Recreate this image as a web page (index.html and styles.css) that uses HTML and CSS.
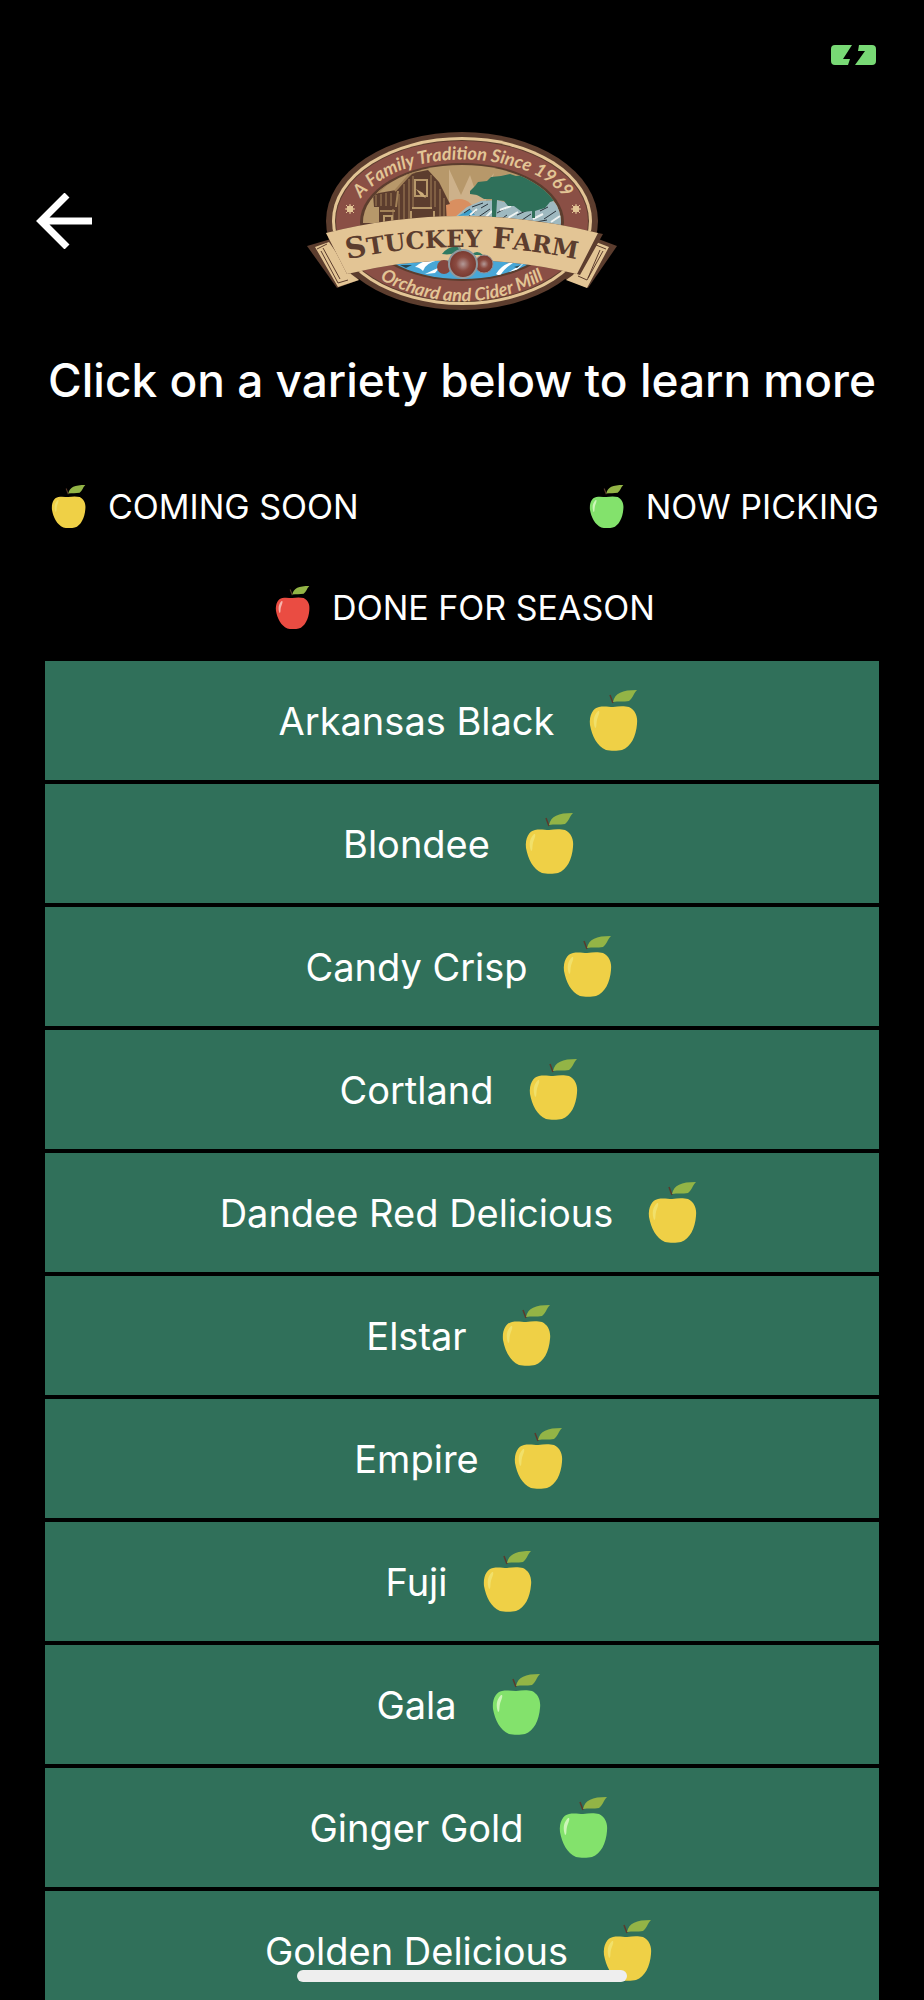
FILE: index.html
```html
<!DOCTYPE html>
<html lang="en">
<head>
    <meta charset="UTF-8">
    <meta name="viewport" content="width=device-width, initial-scale=1.0">
    <title>Stuckey Farm - Apple Varieties</title>
    <link rel="stylesheet" href="styles.css">
</head>
<body>
    <!-- shared apple icon, body colour comes from currentColor -->
    <svg class="sprite" aria-hidden="true">
        <symbol id="apple" viewBox="0 0 62 62">
            <path d="M27 5 L30 13" stroke="#5b3a2c" stroke-width="1.5" fill="none"/>
            <path d="M30 12 C32 3 39 0 54 0 C50 4 50 8 46 11 C41 12 35 11 30 12 Z" fill="#93b446"/>
            <path d="M30 17 C36 16 42 16 46 17 C52 20 55 26 54 34 C53 46 48 57 39 60 C35 61 27 61 23 60 C14 56 9 46 7 35 C6 25 10 18 16 17 C21 16 26 17 30 17 Z" fill="currentColor"/>
            <path class="shine" d="M15 21 C10 26 10 32 12 38 C14 38 13 34 14 30 C15 26 17 23 16 21 Z"/>
        </symbol>
    </svg>

    <div class="screen">
        <div class="status-bar">
            <svg class="battery" viewBox="0 0 46 20" role="img" aria-label="Battery charging">
                <path d="M4 0 H21 L12 14 H19 L17 20 H4 Q0 20 0 16 V4 Q0 0 4 0 Z" fill="#78d975"/>
                <path d="M28 0 H41 Q45 0 45 4 V16 Q45 20 41 20 H24 L34 6 H27 Z" fill="#78d975"/>
            </svg>
        </div>

        <header class="header">
            <a class="back" href="#" aria-label="Back">
                <svg viewBox="0 0 58 56" aria-hidden="true">
                    <path d="M31 2 L5 28 L31 54 M5 28 H56" fill="none" stroke="#fff" stroke-width="7"/>
                </svg>
            </a>

            <svg class="logo" viewBox="0 0 310 180" role="img" aria-label="Stuckey Farm">
                <defs>
                    <path id="arc-top" d="M50 74 A110 62 0 0 1 262 74"/>
                    <path id="arc-banner" d="M24 132 Q155 100 286 132"/>
                    <path id="arc-bottom" d="M62 142 Q155 199 248 142"/>
                    <clipPath id="scene"><ellipse cx="155" cy="91" rx="99" ry="57"/></clipPath>
                    <radialGradient id="fruit">
                        <stop offset="0" stop-color="#b39a98"/>
                        <stop offset="0.5" stop-color="#8a4a40"/>
                        <stop offset="1" stop-color="#77382e"/>
                    </radialGradient>
                </defs>

                <!-- oval frame -->
                <ellipse cx="155" cy="90" rx="136" ry="89" fill="#5c3d2e"/>
                <ellipse cx="155" cy="90" rx="130" ry="84" fill="#e3c595"/>
                <ellipse cx="155" cy="90" rx="127" ry="81" fill="#5c3d2e"/>
                <ellipse cx="155" cy="90" rx="126" ry="80" fill="#8a4f45"/>
                <ellipse cx="155" cy="91" rx="102" ry="59" fill="#5c3d2e"/>

                <g clip-path="url(#scene)">
                    <rect x="50" y="30" width="210" height="62" fill="#b7986a"/>
                    <path d="M142 75 L142 38 L154 64 L163 44 L170 65 L187 42 L176 80 Z" fill="#cdb18a"/>
                    <circle cx="152" cy="85" r="17" fill="#d98f60"/>

                    <!-- barn -->
                    <path d="M66 63 L89 59 L96 51 L106 42 L121 39 L132 51 L143 73 L139 74 L140 94 L72 98 L72 76 L67 76 Z" fill="#5c3d2e"/>
                    <path d="M88 60 L104 42 M70 62 L88 46 L108 41 M91 60 L89 76 M73 80 H88" stroke="#a38258" stroke-width="2" fill="none"/>
                    <path d="M69 64 V75 M74 63 V75 M79 62 V75 M84 62 V75 M92 63 V92 M97 53 V90 M102 48 V88 M106 45 V76 M124 44 V76 M128 50 V76 M133 58 V88 M137 67 V88 M86 78 V94" stroke="#a38258" stroke-width="1"/>
                    <path d="M108 49 H120 V65 H108 Z M105 77 H125 M104 80 V88 M127 80 V88 M77 85 H85 V93 H77 Z" stroke="#b7986a" stroke-width="2" fill="none"/>
                    <path d="M109 58 L116 62 L119 67 L114 65 Z" fill="#cdae7b"/>

                    <!-- rocky shore -->
                    <path d="M148 86 L160 76 L174 70 L190 69 L205 73 L225 74 L246 70 L258 80 L258 98 L148 94 Z" fill="#9fb9c0"/>
                    <path d="M151 85 L163 78 L168 84 Z" fill="#3e9fc9"/>
                    <path d="M157 82 L163 78 M161 86 L169 80 M165 76 L176 72 M170 87 L183 78 M174 77 L181 73 M190 82 L201 76 M193 89 L200 84 M210 84 L221 79 M215 89 L224 83 M233 80 L241 76 M237 88 L249 80 M229 91 L240 89" stroke="#29333b" stroke-width="1"/>
                    <path d="M163 84 L170 78 M178 87 L185 80 M193 79 L204 75 M201 87 L211 81 M226 88 L236 83 M244 91 L253 85" stroke="#eef3f2" stroke-width="2"/>

                    <!-- trees -->
                    <path d="M163 60 L168 55 L171 51 L180 50 L184 46 L194 45 L203 43 L209 45 L217 44 L225 47 L232 50 L241 55 L249 69 L243 71 L238 77 L231 79 L228 80 V87 L225 87 V80 L215 81 L207 75 L201 75 L197 70 L190 69 L189 87 L185 87 V68 L177 68 L170 64 L163 63 Z" fill="#2f705a"/>

                    <!-- river -->
                    <rect x="50" y="118" width="210" height="34" fill="#48a7d7"/>
                    <path d="M108 136 Q118 127 132 129 Q118 132 116 140 Q112 136 108 136 Z M118 143 L133 136 L128 142 Z M189 143 Q195 132 212 129 Q198 135 193 145 Z M202 141 L217 132 L209 140 Z" fill="#fff"/>
                    <path d="M93 134 L105 134 L99 137 Z M207 136 L214 134 L210 137 Z" fill="#294852"/>
                </g>

                <!-- banner tails -->
                <path d="M0 115 L24 108 L52 149 L30 157 Z" fill="#5c3d2e"/>
                <path d="M8 116 L22 111 L44 143 L52 149 L31 156 Z" fill="#e3c595"/>
                <path d="M10 118 L20 113 M14 120 L31 152 L41 149 M16 117 L33 148" stroke="#5c3d2e" stroke-width="1" fill="none"/>
                <path d="M310 115 L286 106 L258 148 L281 157 Z" fill="#5c3d2e"/>
                <path d="M302 116 L289 111 L266 144 L259 149 L280 157 Z" fill="#e3c595"/>
                <path d="M299 118 L289 114 M296 120 L280 149 L271 145 M293 119 L281 147" stroke="#5c3d2e" stroke-width="1" fill="none"/>

                <!-- banner -->
                <path d="M19 102 Q155 68 291 102 L296 103 L273 144 L270 143 Q155 115 40 143 Z" fill="#5c3d2e"/>
                <path d="M19 102 Q155 68 291 102 L270 143 Q155 115 40 143 Z" fill="#e3c595"/>

                <!-- fruit -->
                <path d="M135 123 Q143 113 154 117 Q148 125 135 123 Z M164 124 Q170 118 176 124 Z" fill="#2f7a62"/>
                <circle cx="137" cy="136" r="7" fill="#85463d"/>
                <circle cx="177" cy="133" r="9" fill="url(#fruit)" stroke="#8e8b90"/>
                <circle cx="156" cy="133" r="14" fill="url(#fruit)" stroke="#8e9aa0" stroke-width="2"/>
                <path d="M154 120 L151 115" stroke="#7f9a93" stroke-width="2"/>

                <!-- side stars -->
                <g fill="#e3c595" stroke="#e3c595">
                    <circle cx="43" cy="78" r="3"/>
                    <path d="M43 73 V83 M38 78 H48 M39 74 L47 82 M47 74 L39 82"/>
                    <circle cx="269" cy="78" r="3"/>
                    <path d="M269 73 V83 M264 78 H274 M265 74 L273 82 M273 74 L265 82"/>
                </g>

                <text class="logo-script"><textPath href="#arc-top" startOffset="50%">A Family Tradition Since 1969</textPath></text>
                <text class="logo-name"><textPath href="#arc-banner" startOffset="50%">S<tspan class="small">TUCKEY</tspan> F<tspan class="small">ARM</tspan></textPath></text>
                <text class="logo-script"><textPath href="#arc-bottom" startOffset="50%">Orchard and Cider Mill</textPath></text>
            </svg>
        </header>

        <h1 class="title">Click on a variety below to learn more</h1>

        <div class="legend">
            <div class="legend-item"><svg class="apple soon"><use href="#apple"/></svg>COMING SOON</div>
            <div class="legend-item"><svg class="apple picking"><use href="#apple"/></svg>NOW PICKING</div>
            <div class="legend-item done-item"><svg class="apple done"><use href="#apple"/></svg>DONE FOR SEASON</div>
        </div>

        <ul class="varieties">
            <li><button type="button">Arkansas Black<svg class="apple soon"><use href="#apple"/></svg></button></li>
            <li><button type="button">Blondee<svg class="apple soon"><use href="#apple"/></svg></button></li>
            <li><button type="button">Candy Crisp<svg class="apple soon"><use href="#apple"/></svg></button></li>
            <li><button type="button">Cortland<svg class="apple soon"><use href="#apple"/></svg></button></li>
            <li><button type="button">Dandee Red Delicious<svg class="apple soon"><use href="#apple"/></svg></button></li>
            <li><button type="button">Elstar<svg class="apple soon"><use href="#apple"/></svg></button></li>
            <li><button type="button">Empire<svg class="apple soon"><use href="#apple"/></svg></button></li>
            <li><button type="button">Fuji<svg class="apple soon"><use href="#apple"/></svg></button></li>
            <li><button type="button">Gala<svg class="apple picking"><use href="#apple"/></svg></button></li>
            <li><button type="button">Ginger Gold<svg class="apple picking"><use href="#apple"/></svg></button></li>
            <li><button type="button">Golden Delicious<svg class="apple soon"><use href="#apple"/></svg></button></li>
        </ul>
    </div>

    <div class="home-indicator"></div>
</body>
</html>
```
FILE: styles.css
```css
* {
    box-sizing: border-box;
}
body {
    margin: 0;
    background-color: #000;
    color: #fff;
    font-family: Inter, "Liberation Sans", sans-serif;
}
.sprite {
    display: none;
}
.screen {
    display: flex;
    flex-direction: column;
    height: 100vh;
    overflow: hidden;
}
.status-bar {
    display: flex;
    justify-content: flex-end;
    padding: 45px 47px 66px;
}
.battery {
    width: 46px;
    height: 20px;
}
.header {
    display: grid;
    grid-template-columns: 1fr auto 1fr;
    align-items: center;
    padding: 0 36px;
}
.back {
    justify-self: start;
}
.back svg {
    display: block;
    width: 58px;
    height: 56px;
}
.logo {
    display: block;
    width: 310px;
    height: 180px;
}
.logo-script {
    font-family: "Liberation Sans Narrow", Lato, sans-serif;
    font-size: 18px;
    font-style: italic;
    font-weight: bold;
    fill: #e3c595;
    text-anchor: middle;
}
.logo-name {
    font-family: "DejaVu Serif", serif;
    font-size: 29px;
    font-weight: bold;
    fill: #5c3d2e;
    text-anchor: middle;
}
.logo-name .small {
    font-size: 24px;
}
.title {
    margin: 39px 0 75px;
    font-size: 46px;
    font-weight: 500;
    line-height: 60px;
    text-align: center;
}
.legend {
    display: flex;
    flex-wrap: wrap;
    justify-content: space-between;
    row-gap: 57px;
    padding: 0 45px 31px 47px;
}
.legend-item {
    display: flex;
    align-items: center;
    gap: 17px;
    font-size: 34px;
    line-height: 44px;
}
.done-item {
    flex-basis: 100%;
    justify-content: center;
}
.apple {
    flex: none;
    width: 44px;
    height: 44px;
}
.soon {
    color: #efd046;
    fill: #f1e06a;
}
.picking {
    color: #83e26c;
    fill: #cdf6b8;
}
.done {
    color: #ea4c42;
    fill: #f6b4ac;
}
.varieties {
    display: flex;
    flex-direction: column;
    flex: 1;
    gap: 4px;
    min-height: 0;
    margin: 0;
    padding: 0 45px;
    overflow: hidden;
    list-style: none;
}
.varieties button {
    display: flex;
    align-items: center;
    justify-content: center;
    gap: 29px;
    width: 100%;
    padding: 29px 0 28px;
    border: 0;
    background-color: #30705a;
    color: #fff;
    font-family: inherit;
    font-size: 38px;
    line-height: 62px;
    cursor: pointer;
}
.varieties .apple {
    width: 62px;
    height: 62px;
}
.home-indicator {
    position: fixed;
    bottom: 18px;
    left: 50%;
    width: 330px;
    height: 12px;
    margin-left: -165px;
    border-radius: 6px;
    background-color: #eee;
}
```
